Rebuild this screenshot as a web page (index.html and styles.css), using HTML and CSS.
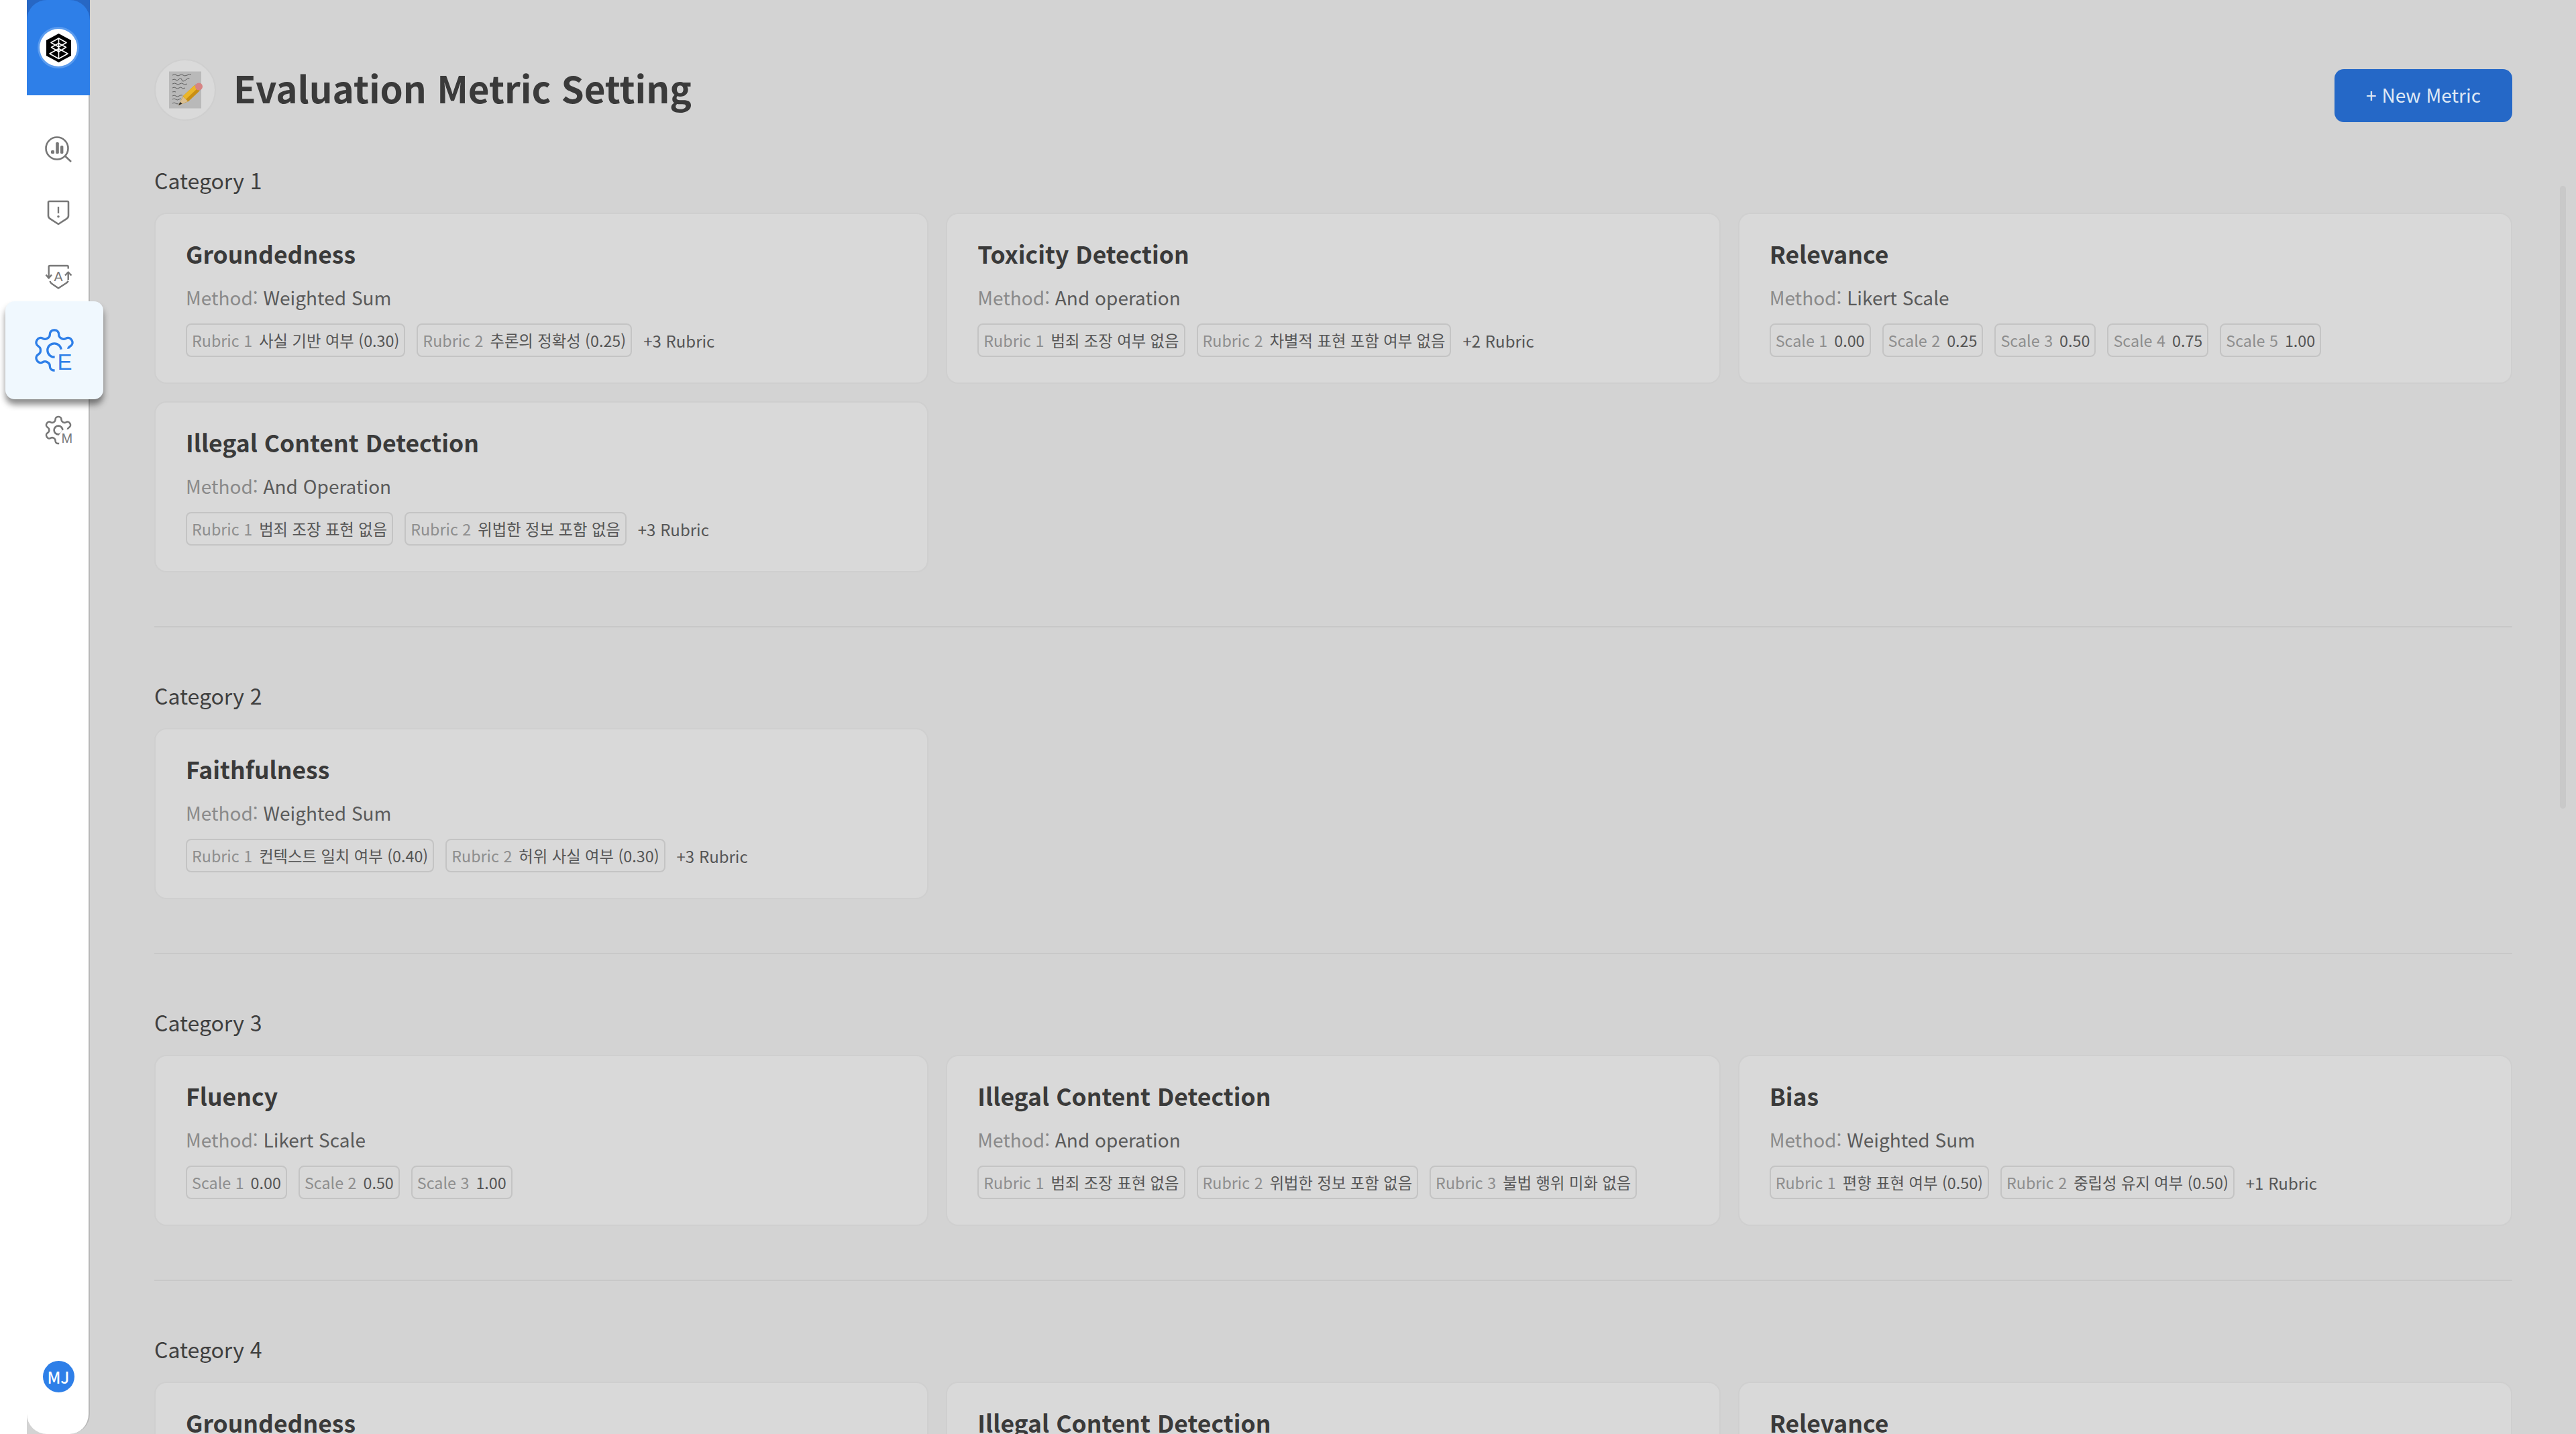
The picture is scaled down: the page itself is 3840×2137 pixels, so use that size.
FILE: index.html
```html
<!DOCTYPE html>
<html lang="ko">
<head>
<meta charset="utf-8">
<title>Evaluation Metric Setting</title>
<link rel="stylesheet" href="styles.css">
</head>
<body>
<div class="app">
  <div class="rail"></div>
  <aside class="sidebar">
    <div class="brand">
      <div class="brand-face">
        <div class="logo">
          <svg width="37" height="43" viewBox="0 0 37 43">
            <polygon points="18.5,0 37,10 37,33 18.5,43 0,33 0,10" fill="#000"/>
            <g fill="none" stroke="#fff" stroke-width="1.6" stroke-linejoin="round">
              <path d="M18.5 7 L30 13.5 18.5 20 7 13.5Z"/>
              <path d="M7.5 20.5 L18.5 14.5 29.5 20.5 18.5 27Z"/>
              <path d="M5 30 L18.5 22.5 32 30 18.5 37.5Z"/>
              <path d="M18.5 7V37.5"/>
            </g>
          </svg>
        </div>
      </div>
    </div>
    <nav class="nav">
      <a class="nav-item">
        <svg class="icon" width="42" height="42" viewBox="0 0 42 42">
          <circle cx="19" cy="20" r="16.5" fill="none" stroke="#777" stroke-width="2.6"/>
          <path d="M31 31.5 40 40" fill="none" stroke="#777" stroke-width="2.6"/>
          <rect x="10" y="23" width="5" height="5" rx="1.5" fill="#777"/>
          <rect x="17.2" y="11" width="4.6" height="17" rx="1.5" fill="#777"/>
          <rect x="24" y="16" width="4.4" height="12" rx="1.5" fill="#777"/>
        </svg>
      </a>
      <a class="nav-item">
        <svg class="icon" width="42" height="42" viewBox="0 0 42 42">
          <path d="M7.5 4H34.5A1.5 1.5 0 0 1 36 5.500V25.500C36 27.500 35 28.900 33.500 29.900L21 38 8.500 29.900C7 28.900 6 27.500 6 25.500V5.500A1.500 1.500 0 0 1 7.500 4Z" fill="none" stroke="#777" stroke-width="2.6" stroke-linejoin="round"/>
          <path d="M21 12V22" stroke="#777" stroke-width="2.4"/>
          <circle cx="21" cy="26.800" r="1.800" fill="#777"/>
        </svg>
      </a>
      <a class="nav-item">
        <svg class="icon" width="42" height="42" viewBox="0 0 42 42">
          <g fill="none" stroke="#777" stroke-width="2.4" stroke-linejoin="round">
            <path d="M6.700 23V6.500A1.500 1.500 0 0 1 8.200 5H34.200A1.500 1.500 0 0 1 35.700 6.500V9.500"/>
            <path d="M2.500 18.500 6.700 23.500 11 18.500"/>
            <path d="M35.700 26V15M31 19.500 35.700 14.500 40.500 19.500"/>
            <path d="M8.500 28C9 30 10 31 11.500 32L21 38.500 31 32C33 31 35 29.500 35.700 27.500"/>
          </g>
          <text class="glyph" x="21" y="27.500" font-size="19.500" text-anchor="middle" fill="#777">A</text>
        </svg>
      </a>
      <a class="nav-item nav-item-active">
        <svg width="72" height="72" viewBox="0 0 24 24">
          <mask id="cut-e">
            <rect width="24" height="24" fill="#fff"/>
            <polygon points="12.200,24 12.200,15 15,11.600 24,10.800 24,24" fill="#000"/>
          </mask>
          <g mask="url(#cut-e)" fill="none" stroke="#2e7fe8" stroke-width="1.100" stroke-linecap="round" stroke-linejoin="round">
            <path d="M12.220 2h-.44a2 2 0 0 0-2 2v.18a2 2 0 0 1-1 1.730l-.43.25a2 2 0 0 1-2 0l-.15-.08a2 2 0 0 0-2.730.73l-.22.38a2 2 0 0 0 .73 2.730l.15.1a2 2 0 0 1 1 1.720v.51a2 2 0 0 1-1 1.740l-.15.09a2 2 0 0 0-.73 2.730l.22.38a2 2 0 0 0 2.730.73l.15-.08a2 2 0 0 1 2 0l.43.25a2 2 0 0 1 1 1.730V20a2 2 0 0 0 2 2h.44a2 2 0 0 0 2-2v-.18a2 2 0 0 1 1-1.730l.43-.25a2 2 0 0 1 2 0l.15.08a2 2 0 0 0 2.730-.73l.22-.39a2 2 0 0 0-.73-2.730l-.15-.08a2 2 0 0 1-1-1.740v-.5a2 2 0 0 1 1-1.740l.15-.09a2 2 0 0 0 .73-2.730l-.22-.38a2 2 0 0 0-2.730-.73l-.15.08a2 2 0 0 1-2 0l-.43-.25a2 2 0 0 1-1-1.730V4a2 2 0 0 0-2-2z"/>
            <circle cx="12" cy="12" r="3.400"/>
          </g>
          <text class="glyph" x="13.500" y="21.700" font-size="11" fill="#2e7fe8">E</text>
        </svg>
      </a>
      <a class="nav-item nav-item-last">
        <svg width="48" height="48" viewBox="0 0 24 24">
          <mask id="cut-m">
            <rect width="24" height="24" fill="#fff"/>
            <polygon points="12.600,24 12.600,15.500 15,12 24,10.800 24,24" fill="#000"/>
          </mask>
          <g mask="url(#cut-m)" fill="none" stroke="#777" stroke-width="1.300" stroke-linecap="round" stroke-linejoin="round">
            <path d="M12.220 2h-.44a2 2 0 0 0-2 2v.18a2 2 0 0 1-1 1.730l-.43.25a2 2 0 0 1-2 0l-.15-.08a2 2 0 0 0-2.730.73l-.22.38a2 2 0 0 0 .73 2.730l.15.1a2 2 0 0 1 1 1.720v.51a2 2 0 0 1-1 1.740l-.15.09a2 2 0 0 0-.73 2.730l.22.38a2 2 0 0 0 2.730.73l.15-.08a2 2 0 0 1 2 0l.43.25a2 2 0 0 1 1 1.730V20a2 2 0 0 0 2 2h.44a2 2 0 0 0 2-2v-.18a2 2 0 0 1 1-1.730l.43-.25a2 2 0 0 1 2 0l.15.08a2 2 0 0 0 2.730-.73l.22-.39a2 2 0 0 0-.73-2.730l-.15-.08a2 2 0 0 1-1-1.740v-.5a2 2 0 0 1 1-1.740l.15-.09a2 2 0 0 0 .73-2.730l-.22-.38a2 2 0 0 0-2.730-.73l-.15.08a2 2 0 0 1-2 0l-.43-.25a2 2 0 0 1-1-1.730V4a2 2 0 0 0-2-2z"/>
            <circle cx="12" cy="12" r="3.200"/>
          </g>
          <text class="glyph" x="14.200" y="21.500" font-size="10" fill="#777">M</text>
        </svg>
      </a>
    </nav>
    <div class="avatar">MJ</div>
  </aside>

  <main class="main">
    <header class="page-header">
      <div class="page-title-group">
        <div class="emoji-badge">
          <svg width="52" height="56" viewBox="0 0 52 56">
            <rect x="2" y="0.500" width="48" height="55" fill="#b9b9b9"/>
            <g fill="none" stroke="#4a4a4a" stroke-width="0.800">
              <path d="M7 6q4-2 6 0t5 0 5 0 6 0 6-1"/>
              <path d="M7 13q3-2 5 0t5-1 4 1 6 0 5-1"/>
              <path d="M7 19q4-2 6 0t5 0 5 0 6 0"/>
              <path d="M7 25q3-2 5 0t5 0 4 0 5 0"/>
              <path d="M7 31q3-1 5 0"/>
              <path d="M7 37q3-2 5 0t5 0 5-1"/>
              <path d="M7 42q3-2 5 0t5 0 3 0"/>
              <path d="M7 48q3-2 5 0t4 0"/>
            </g>
            <polygon points="16,51 23,37 40,21 48,29 31,45" fill="#c98f14"/>
            <polygon points="23,37 40,21 44.500,25.500 27,42" fill="#ebb62a"/>
            <polygon points="16,51 23,38 30,45" fill="#d9bf94"/>
            <polygon points="16,51 18.500,46 21.500,48.500" fill="#2a2a2a"/>
            <polygon points="40,21 48,29 50,27 42,19" fill="#a0a0a0"/>
            <circle cx="46.500" cy="23" r="5.500" fill="#d68484"/>
          </svg>
        </div>
        <h1 class="page-title">Evaluation Metric Setting</h1>
      </div>
      <button class="primary-button">+ New Metric</button>
    </header>

    <section class="category">
      <h2 class="category-label">Category 1</h2>
      <div class="card-grid">
        <article class="card">
          <h3 class="card-title">Groundedness</h3>
          <p class="card-method"><span class="method-key">Method:</span> Weighted Sum</p>
          <div class="chips"><span class="chip"><span class="chip-key">Rubric 1</span>사실 기반 여부 (0.30)</span><span class="chip"><span class="chip-key">Rubric 2</span>추론의 정확성 (0.25)</span><span class="more">+3 Rubric</span></div>
        </article>
        <article class="card">
          <h3 class="card-title">Toxicity Detection</h3>
          <p class="card-method"><span class="method-key">Method:</span> And operation</p>
          <div class="chips"><span class="chip"><span class="chip-key">Rubric 1</span>범죄 조장 여부 없음</span><span class="chip"><span class="chip-key">Rubric 2</span>차별적 표현 포함 여부 없음</span><span class="more">+2 Rubric</span></div>
        </article>
        <article class="card">
          <h3 class="card-title">Relevance</h3>
          <p class="card-method"><span class="method-key">Method:</span> Likert Scale</p>
          <div class="chips"><span class="chip"><span class="chip-key">Scale 1</span>0.00</span><span class="chip"><span class="chip-key">Scale 2</span>0.25</span><span class="chip"><span class="chip-key">Scale 3</span>0.50</span><span class="chip"><span class="chip-key">Scale 4</span>0.75</span><span class="chip"><span class="chip-key">Scale 5</span>1.00</span></div>
        </article>
        <article class="card">
          <h3 class="card-title">Illegal Content Detection</h3>
          <p class="card-method"><span class="method-key">Method:</span> And Operation</p>
          <div class="chips"><span class="chip"><span class="chip-key">Rubric 1</span>범죄 조장 표현 없음</span><span class="chip"><span class="chip-key">Rubric 2</span>위법한 정보 포함 없음</span><span class="more">+3 Rubric</span></div>
        </article>
      </div>
    </section>
    <hr class="divider">

    <section class="category">
      <h2 class="category-label">Category 2</h2>
      <div class="card-grid">
        <article class="card">
          <h3 class="card-title">Faithfulness</h3>
          <p class="card-method"><span class="method-key">Method:</span> Weighted Sum</p>
          <div class="chips"><span class="chip"><span class="chip-key">Rubric 1</span>컨텍스트 일치 여부 (0.40)</span><span class="chip"><span class="chip-key">Rubric 2</span>허위 사실 여부 (0.30)</span><span class="more">+3 Rubric</span></div>
        </article>
      </div>
    </section>
    <hr class="divider">

    <section class="category">
      <h2 class="category-label">Category 3</h2>
      <div class="card-grid">
        <article class="card">
          <h3 class="card-title">Fluency</h3>
          <p class="card-method"><span class="method-key">Method:</span> Likert Scale</p>
          <div class="chips"><span class="chip"><span class="chip-key">Scale 1</span>0.00</span><span class="chip"><span class="chip-key">Scale 2</span>0.50</span><span class="chip"><span class="chip-key">Scale 3</span>1.00</span></div>
        </article>
        <article class="card">
          <h3 class="card-title">Illegal Content Detection</h3>
          <p class="card-method"><span class="method-key">Method:</span> And operation</p>
          <div class="chips"><span class="chip"><span class="chip-key">Rubric 1</span>범죄 조장 표현 없음</span><span class="chip"><span class="chip-key">Rubric 2</span>위법한 정보 포함 없음</span><span class="chip"><span class="chip-key">Rubric 3</span>불법 행위 미화 없음</span></div>
        </article>
        <article class="card">
          <h3 class="card-title">Bias</h3>
          <p class="card-method"><span class="method-key">Method:</span> Weighted Sum</p>
          <div class="chips"><span class="chip"><span class="chip-key">Rubric 1</span>편향 표현 여부 (0.50)</span><span class="chip"><span class="chip-key">Rubric 2</span>중립성 유지 여부 (0.50)</span><span class="more">+1 Rubric</span></div>
        </article>
      </div>
    </section>
    <hr class="divider">

    <section class="category">
      <h2 class="category-label">Category 4</h2>
      <div class="card-grid">
        <article class="card">
          <h3 class="card-title">Groundedness</h3>
        </article>
        <article class="card">
          <h3 class="card-title">Illegal Content Detection</h3>
        </article>
        <article class="card">
          <h3 class="card-title">Relevance</h3>
        </article>
      </div>
    </section>
    <div class="scrollbar"></div>
  </main>
</div>
</body>
</html>
```
FILE: styles.css
```css
* { box-sizing: border-box; }

html, body {
  margin: 0;
  height: 100%;
  overflow: hidden;
}

body {
  background: #d3d3d3;
  color: #3a3a3a;
  font-family: "Noto Sans CJK KR", "Noto Sans", sans-serif;
}

.app {
  display: flex;
  height: 2137px;
  overflow: hidden;
}

.rail {
  flex: none;
  width: 40px;
  background: #fff;
}

.sidebar {
  position: relative;
  z-index: 2;
  flex: none;
  width: 94px;
  display: flex;
  flex-direction: column;
  background: #fff;
  border-right: 2px solid #b8b8b8;
  border-radius: 0 0 30px 30px;
}

.brand {
  height: 142px;
  margin-right: -2px;
  background: #2767c4;
}

.brand-face {
  height: 100%;
  display: flex;
  align-items: center;
  justify-content: center;
  background: #2e7fe8;
  border-radius: 30px 30px 0 0;
}

.logo {
  width: 56px;
  height: 56px;
  display: flex;
  align-items: center;
  justify-content: center;
  background: #fff;
  border-radius: 50%;
  box-shadow: 0 0 0 3px #5a9bee;
}

.nav {
  display: flex;
  flex-direction: column;
  align-items: center;
  margin-right: -2px;
  padding-top: 32px;
}

.nav-item {
  flex: none;
  width: 94px;
  height: 95px;
  display: flex;
  align-items: center;
  justify-content: center;
}

.nav-item-active {
  width: 146px;
  height: 146px;
  margin: -10px 12px 0 0;
  background: #f0f8fe;
  border-radius: 14px;
  box-shadow: 0 8px 10px rgba(0, 0, 0, 0.45);
}

.nav-item-last {
  margin-top: -2px;
}

.glyph {
  font-family: "Liberation Sans", sans-serif;
}

.avatar {
  align-self: center;
  width: 47px;
  height: 47px;
  margin: auto -2px 62px 0;
  display: flex;
  align-items: center;
  justify-content: center;
  color: #fff;
  background: #2e7fe8;
  border-radius: 50%;
  font-size: 24px;
  font-weight: 500;
  line-height: 1;
}

.main {
  position: relative;
  flex: 1;
  min-width: 0;
  padding: 88px 95px 0 96px;
}

.page-header {
  display: flex;
  justify-content: space-between;
  align-items: flex-start;
  margin-bottom: 63px;
}

.page-title-group {
  display: flex;
  align-items: center;
  gap: 26px;
}

.emoji-badge {
  width: 92px;
  height: 92px;
  display: flex;
  align-items: center;
  justify-content: center;
  background: #dadada;
  border: 2px solid #cfcfcf;
  border-radius: 50%;
}

.page-title {
  margin: 0 0 6px;
  font-size: 54.7px;
  font-weight: 700;
  line-height: 80px;
  color: #3a3a3a;
}

.primary-button {
  width: 265px;
  height: 79px;
  margin-top: 15px;
  padding: 0 0 3px;
  color: #dfe8f5;
  background: #2568c7;
  border: 0;
  border-radius: 14px;
  font-family: inherit;
  font-size: 28px;
  font-weight: 400;
}

.category-label {
  margin: 0 0 26px;
  font-size: 32px;
  font-weight: 400;
  line-height: 46px;
  color: #3f3f3f;
}

.card-grid {
  display: grid;
  grid-template-columns: repeat(3, minmax(0, 1fr));
  gap: 26px;
}

.card {
  height: 255px;
  padding: 33px 44px 0 45px;
  background: #d9d9d9;
  border: 2px solid #cfcfcf;
  border-radius: 18px;
}

.card-title {
  margin: 0;
  font-size: 35.5px;
  font-weight: 700;
  line-height: 52px;
  color: #3a3a3a;
}

.card-method {
  margin: 19px 0 0;
  font-size: 28px;
  line-height: 40px;
  color: #5a5a5a;
}

.method-key {
  color: #8a8a8a;
}

.chips {
  display: flex;
  align-items: center;
  gap: 17px;
  margin-top: 19px;
}

.chip {
  flex: none;
  height: 50px;
  padding: 0 7px;
  display: flex;
  align-items: center;
  background: #d9d9d9;
  border: 2px solid #c4c4c4;
  border-radius: 8px;
  font-size: 23.3px;
  color: #555;
  white-space: nowrap;
}

.chip-key {
  margin-right: 10px;
  color: #8e8e8e;
}

.more {
  font-size: 24px;
  color: #555;
  white-space: nowrap;
}

.divider {
  height: 2px;
  margin: 80px 0 78px;
  background: #c8c8c8;
  border: 0;
}

.scrollbar {
  position: absolute;
  top: 277px;
  right: 15px;
  width: 9px;
  height: 928px;
  background: #c9c9c9;
  border-radius: 5px;
}
```
